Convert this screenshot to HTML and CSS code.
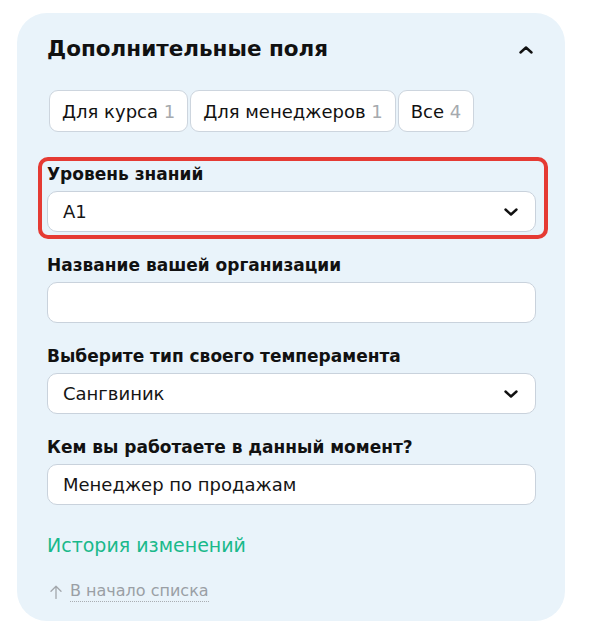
FILE: index.html
```html
<!DOCTYPE html>
<html lang="ru">
<head>
<meta charset="utf-8">
<title>Дополнительные поля</title>
<link rel="stylesheet" href="styles.css">
</head>
<body>
<section class="card">
  <header class="head">
    <h2 class="title">Дополнительные поля</h2>
    <svg class="chev-up" width="14" height="8" viewBox="0 0 14 8" aria-hidden="true"><path d="M1.5 6.5 L7 1.5 L12.5 6.5" fill="none" stroke="#111" stroke-width="2.4" stroke-linecap="round" stroke-linejoin="round"/></svg>
  </header>

  <nav class="tabs">
    <button class="tab">Для курса <span class="count">1</span></button>
    <button class="tab">Для менеджеров <span class="count">1</span></button>
    <button class="tab">Все <span class="count">4</span></button>
  </nav>

  <div class="fields">
    <div class="field hl">
      <div class="label">Уровень знаний</div>
      <div class="input select">
        <span class="value">A1</span>
        <svg class="chev-down" width="14" height="8" viewBox="0 0 14 8" aria-hidden="true"><path d="M1.5 1.5 L7 6.5 L12.5 1.5" fill="none" stroke="#111" stroke-width="2.4" stroke-linecap="round" stroke-linejoin="round"/></svg>
      </div>
    </div>
    <div class="field">
      <div class="label">Название вашей организации</div>
      <div class="input"><span class="value"></span></div>
    </div>
    <div class="field">
      <div class="label">Выберите тип своего темперамента</div>
      <div class="input select">
        <span class="value">Сангвиник</span>
        <svg class="chev-down" width="14" height="8" viewBox="0 0 14 8" aria-hidden="true"><path d="M1.5 1.5 L7 6.5 L12.5 1.5" fill="none" stroke="#111" stroke-width="2.4" stroke-linecap="round" stroke-linejoin="round"/></svg>
      </div>
    </div>
    <div class="field">
      <div class="label">Кем вы работаете в данный момент?</div>
      <div class="input"><span class="value">Менеджер по продажам</span></div>
    </div>
  </div>

  <a class="history">История изменений</a>

  <div class="back">
    <svg class="arrow" width="12" height="14" viewBox="0 0 12 14" aria-hidden="true"><path d="M6 13.5 V1.2 M1 6.2 L6 1.2 L11 6.2" fill="none" stroke="#a3a7ac" stroke-width="1.3" stroke-linecap="round" stroke-linejoin="round"/></svg>
    <span class="back-text">В начало списка</span>
  </div>
</section>
</body>
</html>
```
FILE: styles.css
```css
html, body {
  margin: 0;
  padding: 0;
  background: #ffffff;
}

body {
  font-family: "DejaVu Sans", "Noto Sans", sans-serif;
  color: #111111;
}

.card {
  box-sizing: border-box;
  width: 548px;
  height: 608px;
  margin: 13px 0 0 17px;
  padding: 22px 29px 20px 30px;
  border-radius: 30px;
  background: #e9f3fa;
  display: flex;
  flex-direction: column;
}

.head {
  display: flex;
  align-items: center;
  justify-content: space-between;
  height: 28px;
}

.title {
  margin: 0;
  font-size: 21.5px;
  line-height: 28px;
  font-weight: 700;
  color: #111111;
}

.chev-up {
  margin-right: 3px;
  margin-top: 2px;
}

.tabs {
  display: flex;
  gap: 2px;
  margin: 27px 0 0 2px;
}

.tab {
  box-sizing: border-box;
  height: 42px;
  padding: 0 12px;
  border: 1px solid #cdd5de;
  border-radius: 9px;
  background: #ffffff;
  font-family: inherit;
  font-size: 18px;
  color: #111111;
  display: flex;
  align-items: center;
  white-space: pre;
}

.count {
  color: #a6aaae;
}

.fields {
  display: flex;
  flex-direction: column;
  gap: 22px;
  margin-top: 31px;
}

.field {
  display: flex;
  flex-direction: column;
}

.field.hl {
  margin: -6.5px -12px -7px -9px;
  padding: 2.5px 8px 3px 5px;
  border: 4px solid #e53a33;
  border-radius: 10px;
}

.label {
  font-size: 17px;
  line-height: 22px;
  font-weight: 700;
  color: #111111;
  margin-bottom: 6px;
}

.input {
  box-sizing: border-box;
  height: 41px;
  border: 1px solid #c9d2dc;
  border-radius: 10px;
  background: #ffffff;
  padding: 0 17px 0 15px;
  display: flex;
  align-items: center;
  justify-content: space-between;
}

.value {
  font-size: 18px;
  color: #151515;
}

.history {
  margin-top: 28px;
  font-size: 19px;
  line-height: 24px;
  color: #1ab98b;
  cursor: pointer;
}

.back {
  margin-top: 24px;
  display: flex;
  align-items: center;
  gap: 8px;
  font-size: 16px;
  line-height: 20px;
  color: #9a9fa5;
  padding-left: 3px;
}

.back-text {
  border-bottom: 1px dotted #a9adb2;
}
```
